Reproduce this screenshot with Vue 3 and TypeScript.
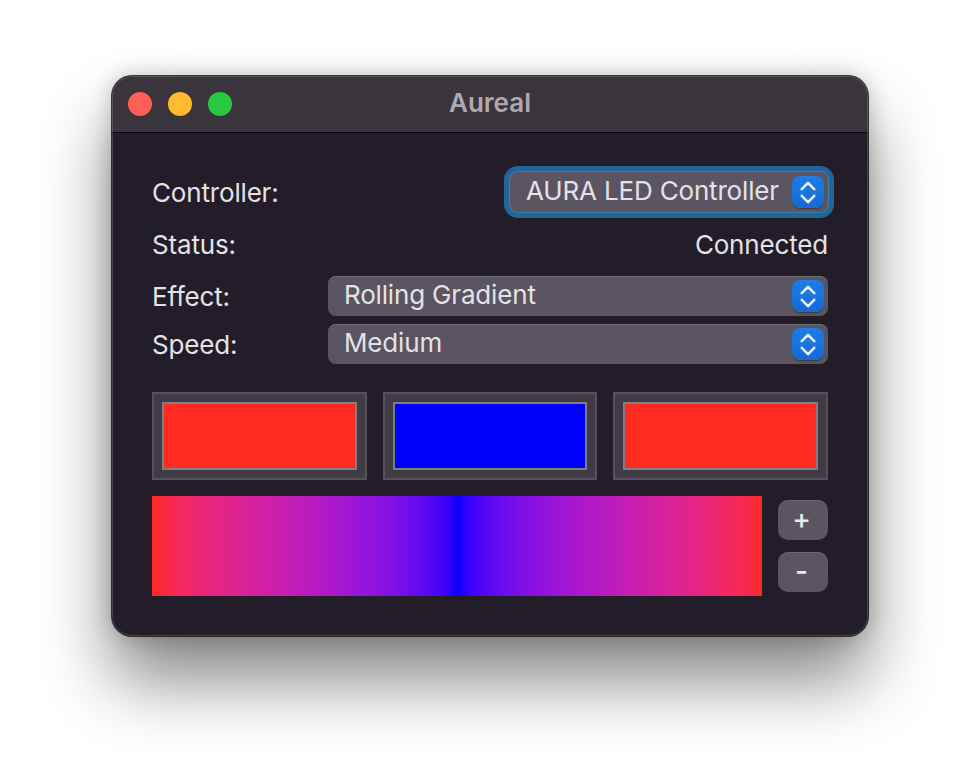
<script setup lang="ts">
const swatches: string[] = ['#ff2a20', '#0000ff', '#ff2a20']
const lights: { name: string; color: string }[] = [
  { name: 'close', color: '#ff5f57' },
  { name: 'minimize', color: '#febc2e' },
  { name: 'zoom', color: '#28c840' },
]
</script>

<template>
  <div class="stage">
    <div class="window">
      <header class="titlebar">
        <div class="lights">
          <span v-for="l in lights" :key="l.name" class="light" :style="{ background: l.color }"></span>
        </div>
        <div class="title">Aureal</div>
      </header>
      <main class="content">
        <div class="row controller">
          <span class="label">Controller:</span>
          <div class="select focused">
            <span class="value">AURA LED Controller</span>
            <span class="stepper">
              <svg width="32" height="32" viewBox="0 0 32 32" fill="none" stroke="#e9f1fc" stroke-width="2.6" stroke-linecap="round" stroke-linejoin="round">
                <path d="M9.8 13.2 16 6.8 22.2 13.2" />
                <path d="M9.8 19.8 16 26.2 22.2 19.8" />
              </svg>
            </span>
          </div>
        </div>
        <div class="row status">
          <span class="label">Status:</span>
          <span class="label">Connected</span>
        </div>
        <div class="row setting">
          <span class="label fixed">Effect:</span>
          <div class="select grow">
            <span class="value">Rolling Gradient</span>
            <span class="stepper">
              <svg width="32" height="32" viewBox="0 0 32 32" fill="none" stroke="#e9f1fc" stroke-width="2.6" stroke-linecap="round" stroke-linejoin="round">
                <path d="M9.8 13.2 16 6.8 22.2 13.2" />
                <path d="M9.8 19.8 16 26.2 22.2 19.8" />
              </svg>
            </span>
          </div>
        </div>
        <div class="row setting second">
          <span class="label fixed">Speed:</span>
          <div class="select grow">
            <span class="value">Medium</span>
            <span class="stepper">
              <svg width="32" height="32" viewBox="0 0 32 32" fill="none" stroke="#e9f1fc" stroke-width="2.6" stroke-linecap="round" stroke-linejoin="round">
                <path d="M9.8 13.2 16 6.8 22.2 13.2" />
                <path d="M9.8 19.8 16 26.2 22.2 19.8" />
              </svg>
            </span>
          </div>
        </div>
        <div class="swatches">
          <div v-for="(c, i) in swatches" :key="i" class="well">
            <div class="color" :style="{ background: c }"></div>
          </div>
        </div>
        <div class="gradient-row">
          <div class="gradient"></div>
          <div class="buttons">
            <button class="btn" type="button">+</button>
            <button class="btn" type="button">-</button>
          </div>
        </div>
      </main>
    </div>
  </div>
</template>

<style>
html,
body {
  margin: 0;
  background: #fff;
}
</style>

<style scoped>
.stage {
  width: 980px;
  height: 784px;
  box-sizing: border-box;
  padding: 76px 112px 0;
  background: #fff;
  overflow: hidden;
  font-family: Inter, "Liberation Sans", sans-serif;
}
.window {
  width: 756px;
  height: 560px;
  box-sizing: border-box;
  border-radius: 20px;
  background: #231d29;
  box-shadow:
    0 0 0 1px rgba(0, 0, 0, 0.75),
    0 44px 70px rgba(0, 0, 0, 0.48),
    0 0 22px rgba(0, 0, 0, 0.22);
  overflow: hidden;
  display: flex;
  flex-direction: column;
  position: relative;
}
.window::after {
  content: "";
  position: absolute;
  inset: 0;
  border-radius: 20px;
  box-shadow: inset 0 0 0 1px rgba(255, 255, 255, 0.16);
  pointer-events: none;
}
.titlebar {
  position: relative;
  height: 57px;
  flex: none;
  box-sizing: border-box;
  background: #3a353c;
  border-bottom: 1px solid #0c0a0e;
  display: flex;
  align-items: center;
  padding-left: 16px;
}
.lights {
  display: flex;
  gap: 16px;
}
.light {
  width: 24px;
  height: 24px;
  border-radius: 50%;
}
.title {
  position: absolute;
  left: 0;
  right: 0;
  top: 12px;
  text-align: center;
  font-size: 26px;
  line-height: 30px;
  font-weight: 600;
  color: #aeaab0;
}
.content {
  flex: 1;
  box-sizing: border-box;
  padding: 39px 40px 0;
  display: flex;
  flex-direction: column;
}
.row {
  display: flex;
  align-items: center;
  justify-content: space-between;
}
.label,
.value {
  font-size: 26px;
  line-height: 30px;
  color: #e4e2e6;
  letter-spacing: -0.17px;
  white-space: nowrap;
}
.value {
  padding-bottom: 2px;
}
.label {
  padding-top: 2px;
}
.fixed {
  width: 176px;
  flex: none;
}
.controller {
  height: 40px;
}
.status {
  height: 24px;
  margin-top: 20px;
  margin-bottom: 20px;
}
.setting {
  height: 40px;
}
.second {
  margin-top: 8px;
}
.select {
  height: 40px;
  box-sizing: border-box;
  border-radius: 8px;
  background: #5a5560;
  box-shadow: inset 0 1px 0 rgba(255, 255, 255, 0.14);
  display: flex;
  align-items: center;
  justify-content: space-between;
  padding: 0 4px 0 16px;
}
.focused {
  width: 318px;
  box-shadow: 0 0 0 1px #3f7fa6, 0 0 0 6px #20669a;
}
.grow {
  flex: 1;
}
.stepper {
  width: 32px;
  height: 32px;
  border-radius: 8px;
  background: linear-gradient(#1d7ce6, #156bd0);
  box-shadow: 0 1px 1px rgba(0, 0, 0, 0.3);
  display: block;
}
.stepper svg {
  display: block;
}
.swatches {
  margin-top: 28px;
  display: grid;
  grid-template-columns: 215px 214px 215px;
  column-gap: 16px;
}
.well {
  height: 88px;
  box-sizing: border-box;
  padding: 8px;
  background: #403b44;
  border: 2px solid #56525b;
}
.color {
  height: 100%;
  box-sizing: border-box;
  border: 2px solid #807e80;
}
.gradient-row {
  margin-top: 16px;
  display: flex;
  gap: 16px;
}
.gradient {
  width: 610px;
  height: 100px;
  background: linear-gradient(90deg in srgb-linear, #ff2a20, #0000ff 50.2%, #ff2a20);
}
.buttons {
  padding-top: 4px;
  display: flex;
  flex-direction: column;
  gap: 12px;
}
.btn {
  width: 50px;
  height: 40px;
  padding: 0 3px 2px 0;
  border: 0;
  border-radius: 10px;
  background: #5a5560;
  box-shadow: inset 0 1px 0 rgba(255, 255, 255, 0.12);
  color: #e8e6ea;
  font-family: Inter, "Liberation Sans", sans-serif;
  font-size: 28px;
  font-weight: 500;
  line-height: 38px;
}
</style>
